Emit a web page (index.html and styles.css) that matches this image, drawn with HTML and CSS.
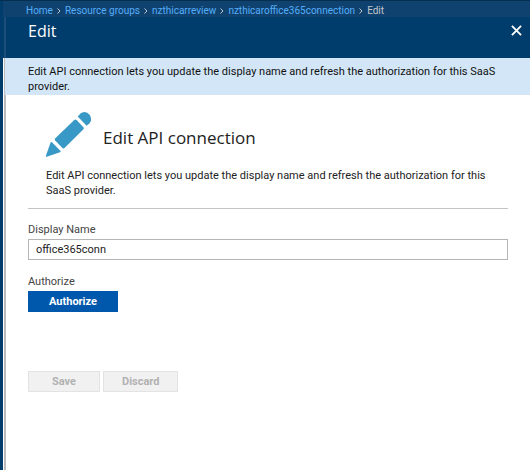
FILE: index.html
```html
<!DOCTYPE html>
<html lang="en">
<head>
<meta charset="utf-8">
<title>Edit</title>
<link rel="stylesheet" href="styles.css">
</head>
<body>
<div class="portal">
  <nav class="breadcrumb" aria-label="Breadcrumb">
    <a href="#">Home</a>
    <svg class="chevron" viewBox="0 0 4 6"><path d="M.5 .5 3 3 .5 5.500"/></svg>
    <a href="#">Resource groups</a>
    <svg class="chevron" viewBox="0 0 4 6"><path d="M.5 .5 3 3 .5 5.500"/></svg>
    <a href="#">nzthicarreview</a>
    <svg class="chevron" viewBox="0 0 4 6"><path d="M.5 .5 3 3 .5 5.500"/></svg>
    <a href="#">nzthicaroffice365connection</a>
    <svg class="chevron" viewBox="0 0 4 6"><path d="M.5 .5 3 3 .5 5.500"/></svg>
    <span>Edit</span>
  </nav>
  <main class="blade">
    <header class="blade-header">
      <h1>Edit</h1>
      <button class="close" type="button" aria-label="Close">
        <svg viewBox="0 0 12 12"><path d="M1 1 11 11M11 1 1 11"/></svg>
      </button>
    </header>
    <div class="blade-body">
      <p class="banner">Edit API connection lets you update the display name and refresh the authorization for this SaaS provider.</p>
      <form class="content">
        <section class="intro">
          <div class="intro-title">
            <svg class="pencil" viewBox="0 0 45 45">
              <path d="M31.700 4.600 34.500 1.500Q36 0 38.500 0 41.500 .3 43.500 2.700 45.300 5 45 8.500 44.800 9.800 43.500 11.200L40.600 13.800Z"/>
              <path d="M9.300 26.300 28 8.200Q29.500 6.900 30.800 8.200L37.400 15.200Q38.300 16.400 37.200 17.600L18.500 36.100Q17.500 37 16.400 36L9.200 28.600Q8.300 27.400 9.300 26.300Z"/>
              <path d="M6 30.200 14.600 38.900Q15 39.700 14 40.200L0 45V43.500L4.600 30.600Q5.200 29.500 6 30.200Z"/>
            </svg>
            <h2>Edit API connection</h2>
          </div>
          <p>Edit API connection lets you update the display name and refresh the authorization for this SaaS provider.</p>
        </section>
        <div class="field">
          <label for="display-name">Display Name</label>
          <input id="display-name" type="text" value="office365conn">
        </div>
        <div class="field">
          <label for="authorize">Authorize</label>
          <button id="authorize" class="button primary" type="button">Authorize</button>
        </div>
        <div class="actions">
          <button class="button" type="submit" disabled>Save</button>
          <button class="button" type="reset" disabled>Discard</button>
        </div>
      </form>
    </div>
  </main>
</div>
</body>
</html>
```
FILE: styles.css
```css
* {
  box-sizing: border-box;
}

body {
  margin: 0;
  background: #003c6c;
  color: #222;
  font: 11px/15px Roboto, "Open Sans", sans-serif;
}

h1, h2, p {
  margin: 0;
  font-weight: 400;
}

h1, h2 {
  font-family: "Open Sans", "Noto Sans", sans-serif;
}

button, input {
  font: inherit;
}

.portal {
  display: flex;
  flex-direction: column;
  min-height: 100vh;
  padding-left: 3px;
  border-top: 1px solid #062e50;
}

.breadcrumb {
  display: flex;
  align-items: center;
  gap: 4px;
  height: 16px;
  padding: 3px 0 0 23px;
  background: #10426f;
  color: #c0c6cc;
  font-size: 10px;
  line-height: 13px;
  white-space: nowrap;
}

.breadcrumb a {
  color: #54aefa;
  text-decoration: none;
}

.chevron {
  width: 4px;
  height: 6px;
  fill: none;
  stroke: #c0c6cc;
}

.blade {
  display: flex;
  flex: 1;
  flex-direction: column;
}

.blade-header {
  display: flex;
  align-items: flex-start;
  justify-content: space-between;
  height: 41px;
  margin-left: 1px;
  padding: 4px 8px 0 22px;
  border-left: 2px solid #1c4e7b;
  color: #fff;
}

.blade-header h1 {
  font-size: 16px;
  line-height: 20px;
}

.close {
  padding: 4px 0 0;
  border: 0;
  background: none;
}

.close svg {
  display: block;
  width: 11px;
  height: 11px;
  fill: none;
  stroke: #fff;
  stroke-width: 2;
}

.blade-body {
  flex: 1;
  border-left: 1px solid #fff;
  background: #fff;
  box-shadow: inset 2px 0 #b9bbbe;
}

.banner {
  margin-left: 1px;
  padding: 6px 30px 1px 23px;
  background: #d2e6f7;
  color: #111;
}

.content {
  display: flex;
  flex-direction: column;
  padding: 17px 22px 16px 24px;
}

.intro {
  padding: 0 18px 10px;
  border-bottom: 1px solid #c4c4c4;
}

.intro-title {
  display: flex;
  align-items: center;
  gap: 12px;
  margin-bottom: 11px;
}

.intro-title h2 {
  padding-top: 6px;
  font-size: 17px;
  line-height: 24px;
}

.pencil {
  width: 45px;
  height: 45px;
  fill: #3999c6;
}

.field {
  display: flex;
  flex-direction: column;
  align-items: flex-start;
  gap: 2px;
  margin-top: 13px;
}

.field + .field {
  margin-top: 14px;
}

.field label {
  color: #444;
}

.field input {
  width: 100%;
  height: 21px;
  padding: 0 7px;
  border: 1px solid #b5b5b5;
  border-radius: 0;
  background: #fff;
  color: #222;
}

.button {
  height: 21px;
  padding: 0 18px;
  border: 1px solid #e3e3e3;
  background: #f1f1f1;
  color: #b2b2b2;
  font-weight: 700;
  line-height: 19px;
}

.primary {
  padding: 0 20px;
  border-color: #0058ad;
  background: #0058ad;
  color: #fff;
}

.actions {
  display: flex;
  gap: 3px;
  margin-top: 59px;
}

.actions .button {
  min-width: 72px;
}
```
